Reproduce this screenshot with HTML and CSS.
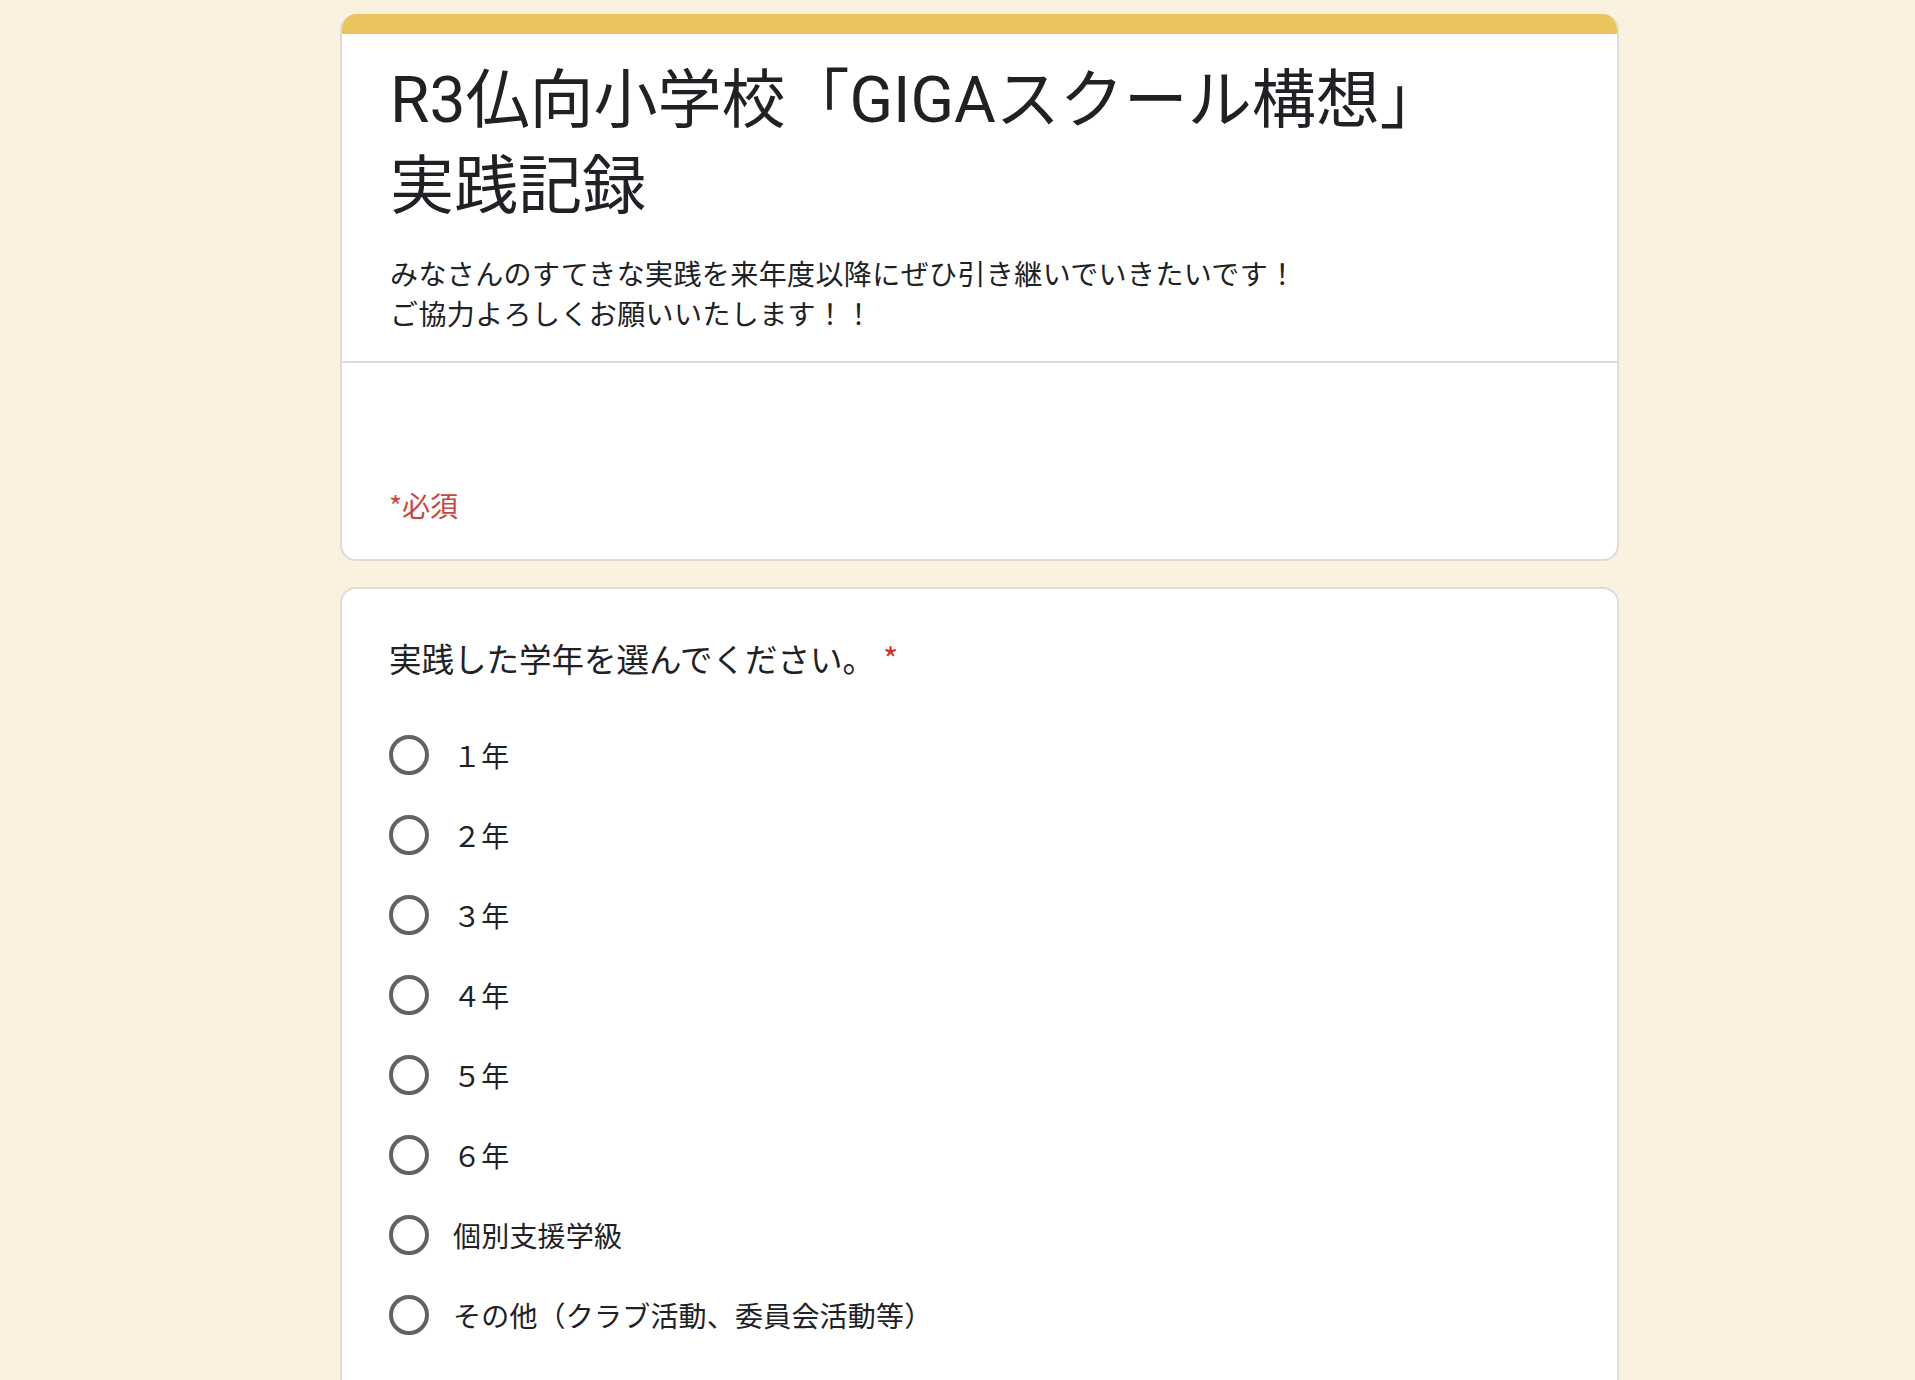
FILE: index.html
```html
<!DOCTYPE html>
<html lang="ja">
<head>
<meta charset="utf-8">
<title>R3仏向小学校「GIGAスクール構想」実践記録</title>
<link rel="stylesheet" href="styles.css">
</head>
<body>
<main class="page">
  <section class="card header-card">
    <div class="accent"></div>
    <div class="header-main">
      <h1 class="title">R3仏向小学校「GIGAスクール構想」<br>実践記録</h1>
      <p class="desc">みなさんのすてきな実践を来年度以降にぜひ引き継いでいきたいです！<br>ご協力よろしくお願いいたします！！</p>
    </div>
    <div class="header-foot">
      <div class="required-note">*必須</div>
    </div>
  </section>

  <section class="card question-card">
    <div class="question">実践した学年を選んでください。<span class="star">*</span></div>
    <ul class="options">
      <li class="option"><span class="radio"></span><span class="label">１年</span></li>
      <li class="option"><span class="radio"></span><span class="label">２年</span></li>
      <li class="option"><span class="radio"></span><span class="label">３年</span></li>
      <li class="option"><span class="radio"></span><span class="label">４年</span></li>
      <li class="option"><span class="radio"></span><span class="label">５年</span></li>
      <li class="option"><span class="radio"></span><span class="label">６年</span></li>
      <li class="option"><span class="radio"></span><span class="label">個別支援学級</span></li>
      <li class="option"><span class="radio"></span><span class="label">その他（クラブ活動、委員会活動等）</span></li>
    </ul>
  </section>
</main>
</body>
</html>
```

FILE: styles.css
```css
html, body {
  margin: 0;
  padding: 0;
}

body {
  background: #faf1df;
  font-family: Roboto, "Noto Sans CJK JP", sans-serif;
  color: #202124;
  height: 1380px;
  overflow: hidden;
}

.page {
  width: 1279px;
  margin-left: 340px;
  padding-top: 14px;
  display: flex;
  flex-direction: column;
  gap: 26px;
}

.card {
  background: #ffffff;
  border: 2px solid #dedcd8;
  border-radius: 16px;
  box-sizing: border-box;
}

.header-card {
  border-top: none;
  overflow: hidden;
}

.accent {
  height: 20px;
  background: #ebc35c;
}

.header-main {
  padding: 24px 48px 28px 48px;
  border-bottom: 2px solid #dedcd8;
}

.title {
  margin: 0;
  font-size: 64px;
  font-weight: 400;
  line-height: 86px;
  letter-spacing: 0;
}

.desc {
  margin: 23px 0 0;
  font-size: 28px;
  line-height: 40px;
  font-family: "Noto Sans CJK JP", sans-serif;
  letter-spacing: 0.4px;
}

.header-foot {
  padding: 122px 48px 34px 47px;
}

.required-note {
  font-size: 28px;
  line-height: 40px;
  color: #c9463d;
  font-family: "Noto Sans CJK JP", sans-serif;
}

.question-card {
  padding: 45px 48px 40px 47px;
  min-height: 900px;
}

.question {
  font-size: 32.5px;
  line-height: 48px;
  font-family: "Noto Sans CJK JP", sans-serif;
}

.star {
  color: #d93025;
  margin-left: 8px;
}

.options {
  list-style: none;
  margin: 33px 0 0;
  padding: 0;
  display: flex;
  flex-direction: column;
}

.option {
  height: 80px;
  display: flex;
  align-items: center;
  gap: 24px;
}

.radio {
  width: 40px;
  height: 40px;
  border: 4px solid #5f6368;
  border-radius: 50%;
  box-sizing: border-box;
  flex: none;
}

.label {
  font-size: 28px;
  line-height: 40px;
  font-family: "Noto Sans CJK JP", sans-serif;
  letter-spacing: 0.2px;
}
```
